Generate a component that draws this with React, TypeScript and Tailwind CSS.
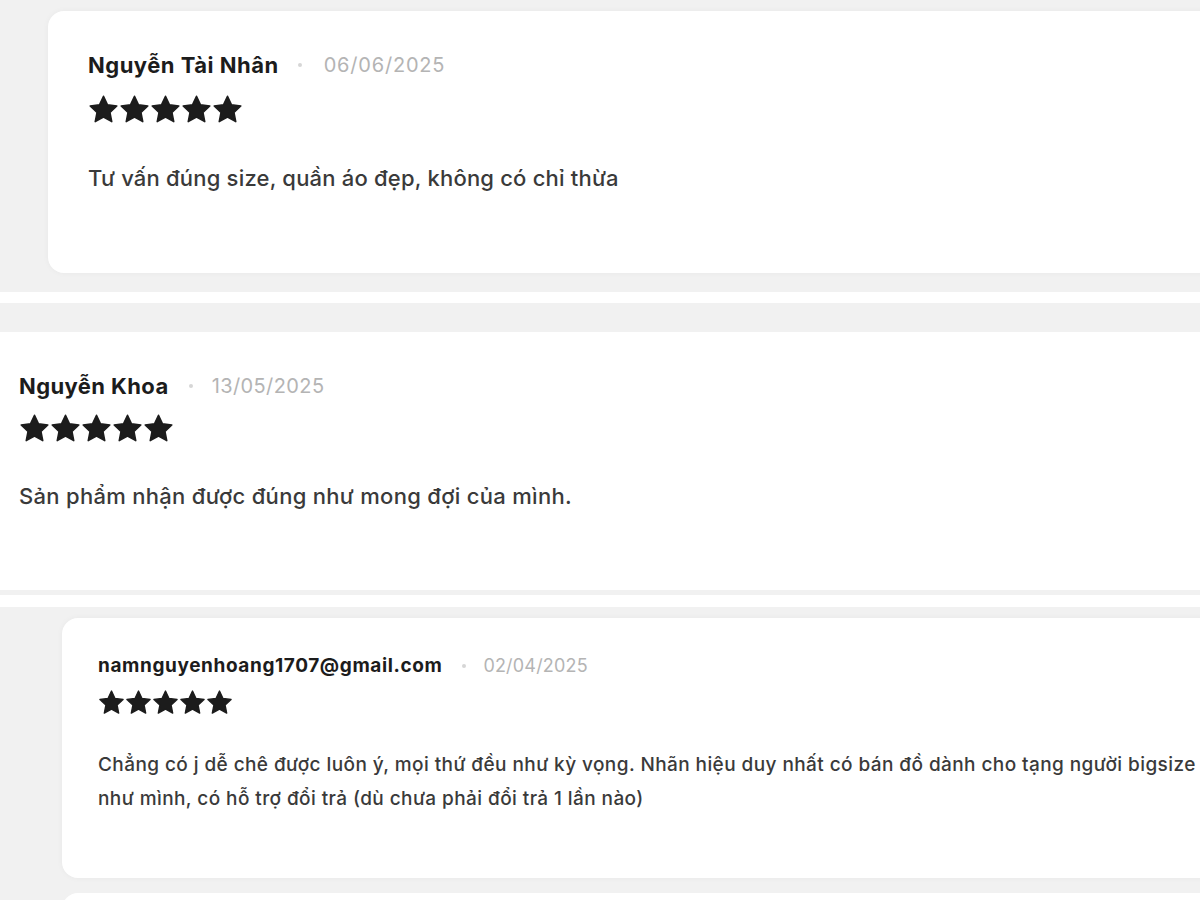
import React from "react";

type Review = {
  name: string;
  date: string;
  text: React.ReactNode;
};

function Star({ size }: { size: number }) {
  return (
    <svg width={size} height={size} viewBox="0 0 24 24" fill="currentColor">
      <path
        d="M12 1.8l3.1 6.6 7.2.9-5.3 5 1.4 7.1L12 17.9l-6.4 3.5 1.4-7.1-5.3-5 7.2-.9z"
        stroke="currentColor"
        strokeWidth="1.2"
        strokeLinejoin="round"
      />
    </svg>
  );
}

function Stars({ size }: { size: number }) {
  return (
    <div className="flex items-center text-[#1c1c1c]">
      {[0, 1, 2, 3, 4].map((i) => (
        <Star key={i} size={size} />
      ))}
    </div>
  );
}

const font = { fontFamily: "Inter, 'Noto Sans', sans-serif" };

export default function App() {
  const first: Review = {
    name: "Nguyễn Tài Nhân",
    date: "06/06/2025",
    text: "Tư vấn đúng size, quần áo đẹp, không có chỉ thừa",
  };
  const second: Review = {
    name: "Nguyễn Khoa",
    date: "13/05/2025",
    text: "Sản phẩm nhận được đúng như mong đợi của mình.",
  };
  const third: Review = {
    name: "namnguyenhoang1707@gmail.com",
    date: "02/04/2025",
    text: (
      <>
        Chẳng có j dễ chê được luôn ý, mọi thứ đều như kỳ vọng. Nhãn hiệu duy nhất có bán đồ dành cho tạng người bigsize
        <br />
        như mình, có hỗ trợ đổi trả (dù chưa phải đổi trả 1 lần nào)
      </>
    ),
  };

  return (
    <div className="w-[1200px] h-[900px] overflow-hidden bg-white" style={font}>
      {/* shot 1 */}
      <div className="bg-[#f1f1f1] pl-12 pt-[11px] pb-[19px] overflow-hidden">
        <div className="w-[1200px] h-[262px] bg-white rounded-2xl shadow-[0_0_6px_rgba(0,0,0,0.04)] pl-10 pt-[43px]">
          <div className="flex items-center">
            <span className="text-[22px] font-bold tracking-[0.5px] text-[#1c1c1c] leading-none">
              {first.name}
            </span>
            <span className="ml-[19px] mr-[22px] w-[4px] h-[4px] rounded-full bg-[#d6d6d6]" />
            <span className="text-[20px] text-[#b4b4b4] tracking-[0.8px] leading-none">{first.date}</span>
          </div>
          <div className="mt-[18px]">
            <Stars size={31} />
          </div>
          <p className="mt-[42px] text-[22px] font-medium text-[#3a3a3a] tracking-[0.2px] leading-none">
            {first.text}
          </p>
        </div>
      </div>

      {/* shot 2 */}
      <div className="h-[11px] bg-white" />
      <div className="h-[29px] bg-[#f1f1f1]" />
      <div className="h-[258px] bg-white pl-[19px] pt-[43px]">
        <div className="flex items-center">
          <span className="text-[22px] font-bold tracking-[0.4px] text-[#1c1c1c] leading-none">
            {second.name}
          </span>
          <span className="ml-[20px] mr-[19px] w-[4px] h-[4px] rounded-full bg-[#d6d6d6]" />
          <span className="text-[20px] text-[#b4b4b4] tracking-[0.4px] leading-none">{second.date}</span>
        </div>
        <div className="mt-[16px]">
          <Stars size={31} />
        </div>
        <p className="mt-[41px] text-[22px] font-medium text-[#3a3a3a] tracking-[0.3px] leading-none">
          {second.text}
        </p>
      </div>

      {/* shot 3 */}
      <div className="h-[5px] bg-[#f1f1f1]" />
      <div className="h-[12px] bg-white" />
      <div className="bg-[#f1f1f1] pl-[62px] pt-[11px] overflow-hidden">
        <div className="w-[1200px] h-[260px] bg-white rounded-2xl shadow-[0_0_6px_rgba(0,0,0,0.04)] pl-9 pt-[38px]">
          <div className="flex items-center">
            <span className="text-[19px] font-bold tracking-[0.6px] text-[#1c1c1c] leading-none">
              {third.name}
            </span>
            <span className="ml-[20px] mr-[17px] w-[4px] h-[4px] rounded-full bg-[#d6d6d6]" />
            <span className="text-[18px] text-[#b4b4b4] tracking-[0.2px] leading-none">{third.date}</span>
          </div>
          <div className="mt-[14px]">
            <Stars size={27} />
          </div>
          <p className="mt-[32px] text-[19px] font-medium text-[#3a3a3a] tracking-[0.42px] leading-[34px]">
            {third.text}
          </p>
        </div>
        <div className="h-[15px]" />
        <div className="w-[1200px] h-[40px] bg-white rounded-2xl" />
      </div>
    </div>
  );
}
